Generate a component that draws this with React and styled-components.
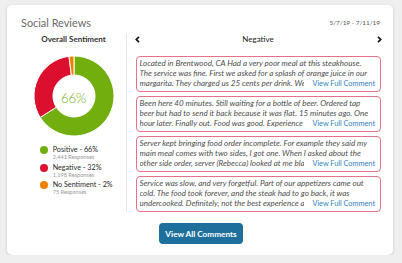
import React from 'react';
import styled, { createGlobalStyle } from 'styled-components';

const GlobalStyle = createGlobalStyle`
  body {
    margin: 0;
    background: #efefef;
    font-family: Lato, "Liberation Sans", sans-serif;
  }
`;

const Card = styled.div`
  box-sizing: border-box;
  width: 386px;
  height: 250px;
  margin: 5px 0 0 7px;
  padding: 10px 12px 11px 14px;
  background: #fff;
  border-radius: 5px;
  box-shadow: 0 1px 3px rgba(0, 0, 0, 0.18);
  display: flex;
  flex-direction: column;
`;

const Header = styled.div`
  height: 14px;
  display: flex;
  align-items: center;
  justify-content: space-between;
`;

const Title = styled.h2`
  margin: 0;
  font-size: 10.9px;
  font-weight: 400;
  color: #6b6b6b;
`;

const DateRange = styled.span`
  font-size: 6.4px;
  color: #555;
  margin-right: 1px;
`;

const Body = styled.div`
  margin-top: 4px;
  display: grid;
  grid-template-columns: 106px minmax(0, 1fr);
  height: 178px;
`;

const SentimentColumn = styled.div`
  border-right: 1px solid #e8e8e8;
  display: flex;
  flex-direction: column;
  align-items: center;
`;

const ColumnHeading = styled.div`
  height: 12px;
  display: flex;
  align-items: center;
  font-size: 8px;
  font-weight: ${(p) => (p.$bold ? 700 : 400)};
  color: ${(p) => (p.$bold ? '#333' : '#222')};
`;

const DonutWrap = styled.div`
  margin-top: 10px;
  display: grid;
  place-items: center;
  & > * {
    grid-area: 1 / 1;
  }
`;

const DonutLabel = styled.span`
  font-size: 13px;
  font-weight: 300;
  color: #74ae12;
  margin-top: 3px;
`;

const Legend = styled.div`
  align-self: stretch;
  margin-top: 9px;
  padding-left: 19px;
  display: flex;
  flex-direction: column;
  gap: 3.5px;
`;

const LegendItem = styled.div`
  display: grid;
  grid-template-columns: 8px 1fr;
  column-gap: 4.7px;
`;

const Dot = styled.span`
  width: 8px;
  height: 8px;
  border-radius: 50%;
  background: ${(p) => p.$color};
`;

const LegendLabel = styled.span`
  font-size: 7.2px;
  line-height: 8px;
  color: #2a2a2a;
`;

const LegendSub = styled.span`
  grid-column: 2;
  font-size: 5.6px;
  line-height: 6px;
  color: #9a9a9a;
`;

const ReviewColumn = styled.div`
  min-width: 0;
  padding-left: 9px;
  display: flex;
  flex-direction: column;
`;

const NavRow = styled.div`
  height: 12px;
  display: flex;
  align-items: center;
  justify-content: space-between;
  margin: 0 -1px 0 -2px;
`;

const NavButton = styled.button`
  border: 0;
  background: none;
  padding: 0;
  width: 6px;
  height: 8px;
  display: flex;
  align-items: center;
  justify-content: center;
  cursor: pointer;
`;

const ReviewList = styled.div`
  margin-top: 11px;
  display: flex;
  flex-direction: column;
  gap: 4.5px;
`;

const ReviewBox = styled.div`
  box-sizing: border-box;
  height: 35.5px;
  padding: 2.3px 5px 0 2.5px;
  border: 1px solid #e4738a;
  border-radius: 4px;
  overflow: hidden;
  font-size: 8px;
  line-height: 9.8px;
`;

const Line = styled.div`
  white-space: nowrap;
  overflow: hidden;
  font-style: italic;
  color: #4d4d4d;
`;

const LastLine = styled.div`
  display: flex;
  align-items: baseline;
`;

const ClippedLine = styled(Line)`
  flex: 1;
  min-width: 0;
`;

const FullLink = styled.a`
  flex: none;
  margin-left: 8.5px;
  font-size: 7.3px;
  color: #2f7fbd;
  text-decoration: none;
  white-space: nowrap;
  cursor: pointer;
`;

const Footer = styled.div`
  margin-top: 12px;
  display: flex;
  justify-content: center;
`;

const ViewAllButton = styled.button`
  width: 84px;
  height: 21px;
  border: 0;
  border-radius: 4px;
  background: #1f6f9c;
  color: #fff;
  font-family: inherit;
  font-size: 8.2px;
  font-weight: 700;
  cursor: pointer;
`;

const segments = [
  { color: '#72ae0e', from: 0, to: 237.6 },
  { color: '#dc0f2e', from: 237.6, to: 352.8 },
  { color: '#f07f00', from: 352.8, to: 360 },
];

const point = (c, rad, a) => {
  const t = (a * Math.PI) / 180;
  return `${(c + rad * Math.sin(t)).toFixed(2)} ${(c - rad * Math.cos(t)).toFixed(2)}`;
};

const arcPath = (c, R, r, a0, a1) => {
  const large = a1 - a0 > 180 ? 1 : 0;
  return `M ${point(c, R, a0)} A ${R} ${R} 0 ${large} 1 ${point(c, R, a1)} L ${point(
    c,
    r,
    a1
  )} A ${r} ${r} 0 ${large} 0 ${point(c, r, a0)} Z`;
};

const Donut = () => (
  <svg width="82" height="82" viewBox="0 0 82 82">
    {segments.map((s) => (
      <path
        key={s.color}
        d={arcPath(41, 40, 21, s.from, s.to)}
        fill={s.color}
        stroke="#fff"
        strokeWidth="1"
      />
    ))}
  </svg>
);

const Chevron = ({ dir }) => (
  <svg width="5" height="7" viewBox="0 0 5 7">
    <path
      d={dir === 'left' ? 'M4 0.8 L1.3 3.5 L4 6.2' : 'M1 0.8 L3.7 3.5 L1 6.2'}
      fill="none"
      stroke="#111"
      strokeWidth="1.7"
    />
  </svg>
);

const legend = [
  { color: '#72ae0e', label: 'Positive - 66%', count: '2,441 Responses' },
  { color: '#dc0f2e', label: 'Negative - 32%', count: '1,198 Responses' },
  { color: '#f07f00', label: 'No Sentiment - 2%', count: '75 Responses' },
];

// each comment is cut to its first three lines, the last one shares the row with the link
const reviews = [
  [
    'Located in Brentwood, CA Had a very poor meal at this steakhouse.',
    'The service was fine. First we asked for a splash of orange juice in our',
    'margarita. They charged us 25 cents per drink. We asked for a refund',
  ],
  [
    'Been here 40 minutes. Still waiting for a bottle of beer. Ordered tap',
    'beer but had to send it back because it was flat. 15 minutes ago. One',
    'hour later. Finally out. Food was good. Experience was terrible',
  ],
  [
    'Server kept bringing food order incomplete. For example they said my',
    'main meal comes with two sides, I got one. When I asked about the',
    'other side order, server (Rebecca) looked at me blankly and left',
  ],
  [
    'Service was slow, and very forgetful. Part of our appetizers came out',
    'cold. The food took forever, and the steak had to go back, it was',
    'undercooked. Definitely, not the best experience at this place',
  ],
];

export default function App() {
  return (
    <>
      <GlobalStyle />
      <Card>
        <Header>
          <Title>Social Reviews</Title>
          <DateRange>5/7/19 - 7/11/19</DateRange>
        </Header>
        <Body>
          <SentimentColumn>
            <ColumnHeading $bold>Overall Sentiment</ColumnHeading>
            <DonutWrap>
              <Donut />
              <DonutLabel>66%</DonutLabel>
            </DonutWrap>
            <Legend>
              {legend.map((l) => (
                <LegendItem key={l.label}>
                  <Dot $color={l.color} />
                  <LegendLabel>{l.label}</LegendLabel>
                  <LegendSub>{l.count}</LegendSub>
                </LegendItem>
              ))}
            </Legend>
          </SentimentColumn>
          <ReviewColumn>
            <NavRow>
              <NavButton>
                <Chevron dir="left" />
              </NavButton>
              <ColumnHeading>Negative</ColumnHeading>
              <NavButton>
                <Chevron dir="right" />
              </NavButton>
            </NavRow>
            <ReviewList>
              {reviews.map((lines, i) => (
                <ReviewBox key={i}>
                  <Line>{lines[0]}</Line>
                  <Line>{lines[1]}</Line>
                  <LastLine>
                    <ClippedLine>{lines[2]}</ClippedLine>
                    <FullLink>View Full Comment</FullLink>
                  </LastLine>
                </ReviewBox>
              ))}
            </ReviewList>
          </ReviewColumn>
        </Body>
        <Footer>
          <ViewAllButton>View All Comments</ViewAllButton>
        </Footer>
      </Card>
    </>
  );
}
